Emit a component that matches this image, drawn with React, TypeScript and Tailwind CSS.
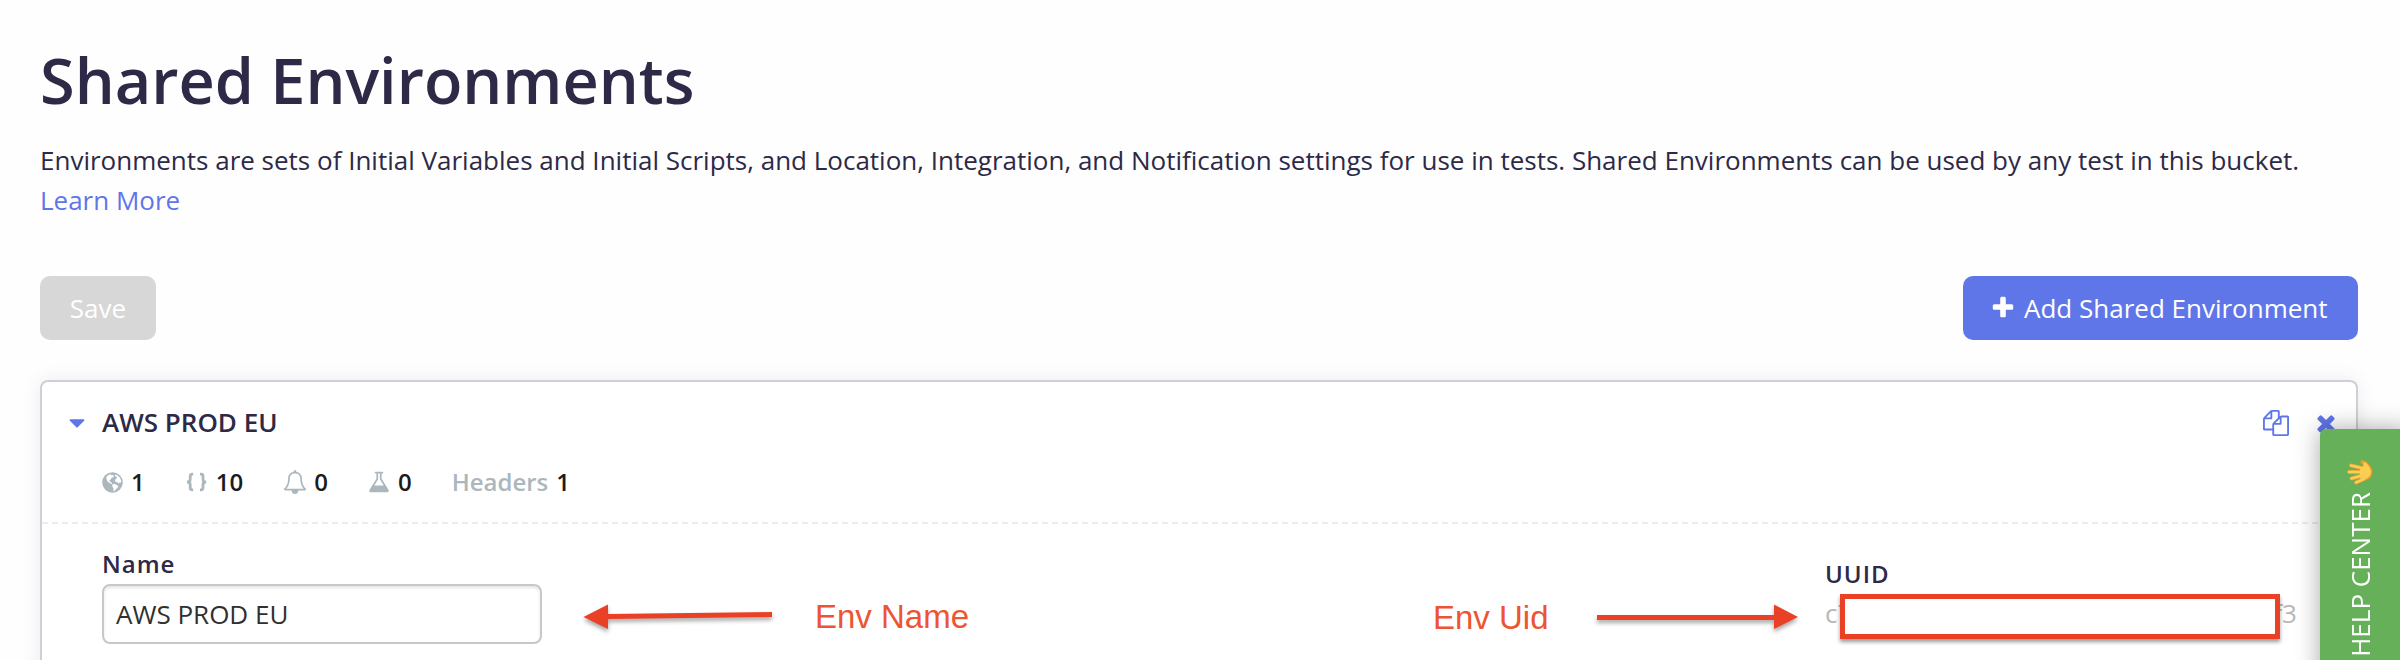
import React from "react";

const FA = ({ d, className }: { d: string; className: string }) => (
  <svg viewBox="0 0 1792 1792" fill="currentColor" className={className}>
    <path d={d} />
  </svg>
);

const PLUS =
  "M1600 736v192q0 40-28 68t-68 28h-416v416q0 40-28 68t-68 28h-192q-40 0-68-28t-28-68v-416h-416q-40 0-68-28t-28-68v-192q0-40 28-68t68-28h416v-416q0-40 28-68t68-28h192q40 0 68 28t28 68v416h416q40 0 68 28t28 68z";
const TIMES =
  "M1490 1322q0 40-28 68l-136 136q-28 28-68 28t-68-28l-294-294-294 294q-28 28-68 28t-68-28l-136-136q-28-28-28-68t28-68l294-294-294-294q-28-28-28-68t28-68l136-136q28-28 68-28t68 28l294 294 294-294q28-28 68-28t68 28l136 136q28 28 28 68t-28 68l-294 294 294 294q28 28 28 68z";
const CARET =
  "M1408 704q0 26-19 45l-448 448q-19 19-45 19t-45-19l-448-448q-19-19-19-45t19-45 45-19h896q26 0 45 19t19 45z";
const FILES =
  "M1696 384q40 0 68 28t28 68v1216q0 40-28 68t-68 28h-960q-40 0-68-28t-28-68v-288h-544q-40 0-68-28t-28-68v-672q0-40 20-88t48-76l408-408q28-28 76-48t88-20h416q40 0 68 28t28 68v328q68-40 128-40h416zm-544 213l-299 299h299v-299zm-640-384l-299 299h299v-299zm196 647l316-316v-416h-384v416q0 40-28 68t-68 28h-416v640h512v-256q0-40 20-88t48-76zm956 804v-1152h-384v416q0 40-28 68t-68 28h-416v640h896z";
const BELL =
  "M246 1408h1300q-266-300-266-832 0-51-24-105t-69-103-121.5-80.5-169.5-31.5-169.5 31.5-121.5 80.5-69 103-24 105q0 532-266 832zm1482 0q0 52-38 90t-90 38h-448q0 106-75 181t-181 75-181-75-75-181h-448q-52 0-90-38t-38-90q50-42 91-88t85-119.5 74.5-158.5 50-206 19.5-260q0-152 117-282.5t307-158.5q-8-19-8-39 0-40 28-68t68-28 68 28 28 68q0 20-8 39 190 28 307 158.5t117 282.5q0 139 19.5 260t50 206 74.5 158.5 85 119.5 91 88z";
const FLASK =
  "M1591 1448q56 89 21.5 152.5t-140.5 63.5h-1152q-106 0-140.5-63.5t21.5-152.5l503-793v-399h-64q-26 0-45-19t-19-45 19-45 45-19h512q26 0 45 19t19 45-19 45-45 19h-64v399zm-779-725l-272 429h712l-272-429-20-31v-436h-128v436z";

const Globe = () => (
  <svg viewBox="0 0 21 21" className="mr-2 size-[21px] text-[#abb7bd]">
    <circle cx="10.5" cy="10.5" r="10.3" fill="currentColor" />
    <path
      fill="#fff"
      d="M4.200 5.200L6 3.300 8.600 2.300 10 3.400 11.200 3 12.300 4.200 11 5.300 9.400 6 8.800 7.600 7.300 8.300 7.800 9.600 9.200 10.300 10.200 11.500 9.600 12.200 8 11 6.200 10.200 4.900 8.300ZM13 2.600L15.500 3.200 18 5.800 19.300 9.200 18.600 10.800 17.500 10.400 16.600 11.800 15.600 10.200 13.800 9.900 12.900 8.600 13.600 7 15 6.300 14.500 4.800 13.200 4.200ZM10.600 12.300L12.200 11.800 14.600 13 16.400 14 15.600 15.800 13.900 17.200 12.600 19 11.500 18.900 11.400 16.200 10.200 14.300Z"
    />
  </svg>
);

const Braces = () => (
  <svg
    viewBox="0 0 22 20"
    className="mr-2 h-5 w-[22px] text-[#abb7bd]"
    fill="none"
    stroke="currentColor"
    strokeWidth="2.800"
  >
    <path d="M7.200 2.200H6.200Q4.200 2.200 4.200 4.200V7.400Q4.200 10 1 10Q4.200 10 4.200 12.600V15.800Q4.200 17.800 6.200 17.800H7.200" />
    <path d="M14 2.200H15Q17 2.200 17 4.200V7.400Q17 10 20.200 10Q17 10 17 12.600V15.800Q17 17.800 15 17.800H14" />
  </svg>
);

const Wave = () => (
  <svg viewBox="0 0 28 26" className="h-[26px] w-[28px]">
    <g stroke="#e5a02c" strokeLinecap="round" strokeWidth="4">
      <path d="M16 9L5 6.500M15 13L3 13M16 16.500L5.500 19.500M18 20L10 23.500M20 7L16.500 3" />
    </g>
    <path d="M14 7.500Q18 7 18 4Q17 1 19 2Q22 3 25 8Q28 13 25 18Q20 24 14 20Z" fill="#e59a2b" />
    <g stroke="#fccd53" strokeLinecap="round" strokeWidth="2.600">
      <path d="M16 9L5 6.500M15 13L3 13M16 16.500L5.500 19.500M18 20L10 23.500" />
    </g>
    <path d="M14 8.500Q19 8 17.500 3Q20 3 23.500 8Q26.500 13 23.500 17.500Q19 22 14 19Z" fill="#fccd53" />
  </svg>
);

const Stat = ({ icon, value }: { icon: React.ReactNode; value: string }) => (
  <div className="flex items-center">
    {icon}
    <span>{value}</span>
  </div>
);

export default function App() {
  return (
    <div className="relative h-[660px] w-[2400px] overflow-hidden bg-[#fefefe] font-['Open_Sans',sans-serif] text-[26px] text-[#2d2947]">
      <div className="pt-[36px] pr-[42px] pl-10">
        <h1 className="h-[88px] text-[63px] leading-[88px] font-semibold whitespace-nowrap">Shared Environments</h1>
        <p className="mt-4 h-20 leading-10 whitespace-nowrap">
          Environments are sets of Initial Variables and Initial Scripts, and Location, Integration, and Notification
          settings for use in tests. Shared Environments can be used by any test in this bucket.
          <br />
          <a className="text-[#5f76e8]">Learn More</a>
        </p>
        <div className="mt-14 flex h-16 justify-between text-white">
          <button className="w-[116px] rounded-[10px] bg-[#d7d7d7]">Save</button>
          <button className="flex w-[395px] items-center rounded-[10px] bg-[#5f76e8] pl-[27px] whitespace-nowrap">
            <FA d={PLUS} className="mr-[8px] size-[26px]" />
            Add Shared Environment
          </button>
        </div>
        <section className="mt-10 h-[320px] rounded-t-[8px] border-2 border-b-0 border-[#cbd1d6] bg-white shadow-[0_0_20px_rgba(0,0,0,0.08)]">
          <div className="flex h-[140px] flex-col">
            <div className="mt-[21px] flex h-10 items-center pl-[22px]">
              <FA d={CARET} className="size-[26px] text-[#5f76e8]" />
              <h2 className="mb-[2px] ml-[12px] font-semibold">AWS PROD EU</h2>
              <div className="ml-auto flex items-center pr-[17px] text-[#5f76e8]">
                <FA d={FILES} className="size-[26px]" />
                <FA d={TIMES} className="ml-[24px] size-[26px]" />
              </div>
            </div>
            <div className="mt-[22px] flex h-[34px] items-center pl-[60px] text-[24px] font-semibold text-[#1b1b1b]">
              <Stat icon={<Globe />} value="1" />
              <div className="ml-[41px]">
                <Stat icon={<Braces />} value="10" />
              </div>
              <div className="ml-10">
                <Stat icon={<FA d={BELL} className="mr-[7px] size-6 text-[#abb7bd]" />} value="0" />
              </div>
              <div className="ml-[39px]">
                <Stat icon={<FA d={FLASK} className="mr-[7px] size-6 text-[#abb7bd]" />} value="0" />
              </div>
              <span className="ml-10 text-[#abb7bd]">Headers</span>
              <span className="ml-[8px]">1</span>
            </div>
          </div>
          <svg className="block h-[2px] w-full">
            <line x1="0" y1="1" x2="2314" y2="1" stroke="#ececec" strokeWidth="2" strokeDasharray="6 4" />
          </svg>
          <div className="flex pl-[60px]">
            <div className="mt-[23px] w-[440px]">
              <label className="block h-9 text-[24px] leading-[34px] font-semibold tracking-[1px]">Name</label>
              <div className="mt-[1px] flex h-[60px] items-center rounded-[8px] border-2 border-[#c8c8c8] bg-white pl-3 text-[#303030] shadow-[inset_0_2px_3px_rgba(0,0,0,0.1)]">
                AWS PROD EU
              </div>
            </div>
            <svg className="mt-[69px] ml-[39px] h-[50px] w-[196px]" viewBox="0 0 196 50">
              <g fill="#ea4025" filter="drop-shadow(0 3px 2px rgba(0,0,0,.35))">
                <path d="M2.500 24L27 11.500V21L191 19V24L27 26V36Z" />
              </g>
            </svg>
            <span className="mt-[73px] ml-[38px] h-10 w-[170px] font-['Liberation_Sans',sans-serif] text-[33px] leading-10 whitespace-nowrap text-[#ed5431]">
              Env Name
            </span>
            <span className="mt-[74px] ml-[448px] h-10 w-[140px] font-['Liberation_Sans',sans-serif] text-[33px] leading-10 whitespace-nowrap text-[#ed5431]">
              Env Uid
            </span>
            <svg className="mt-[69px] ml-[21px] h-[50px] w-[210px]" viewBox="0 0 210 50">
              <g fill="#ea4025" filter="drop-shadow(0 3px 2px rgba(0,0,0,.35))">
                <path d="M3 22H180V11.500L204 24L180 36V27H3Z" />
              </g>
            </svg>
            <div className="mt-[33px] ml-[21px]">
              <label className="block h-9 text-[24px] leading-[34px] font-semibold tracking-[1px]">UUID</label>
              <div className="flex h-[50px] leading-10 text-[#b8b8b8]">
                <span className="w-[15px]">c7</span>
                <div className="relative z-10 mt-[1px] h-[45px] w-[440px] border-[5px] border-[#ea4025] bg-white shadow-[0_3px_4px_rgba(0,0,0,0.4)]" />
                <span className="flex w-[17px] justify-end">f3</span>
              </div>
            </div>
          </div>
        </section>
      </div>
      <aside className="absolute top-[429px] left-[2320px] z-20 flex h-[260px] w-[90px] flex-col items-center rounded-tl-[6px] bg-[#65b058] pt-[30px] pr-[10px] text-white shadow-[0_0_24px_rgba(0,0,0,0.35)]">
        <Wave />
        <span className="mt-[7px] rotate-180 text-[26px] leading-[30px] whitespace-nowrap [writing-mode:vertical-rl]">
          HELP CENTER
        </span>
      </aside>
    </div>
  );
}
